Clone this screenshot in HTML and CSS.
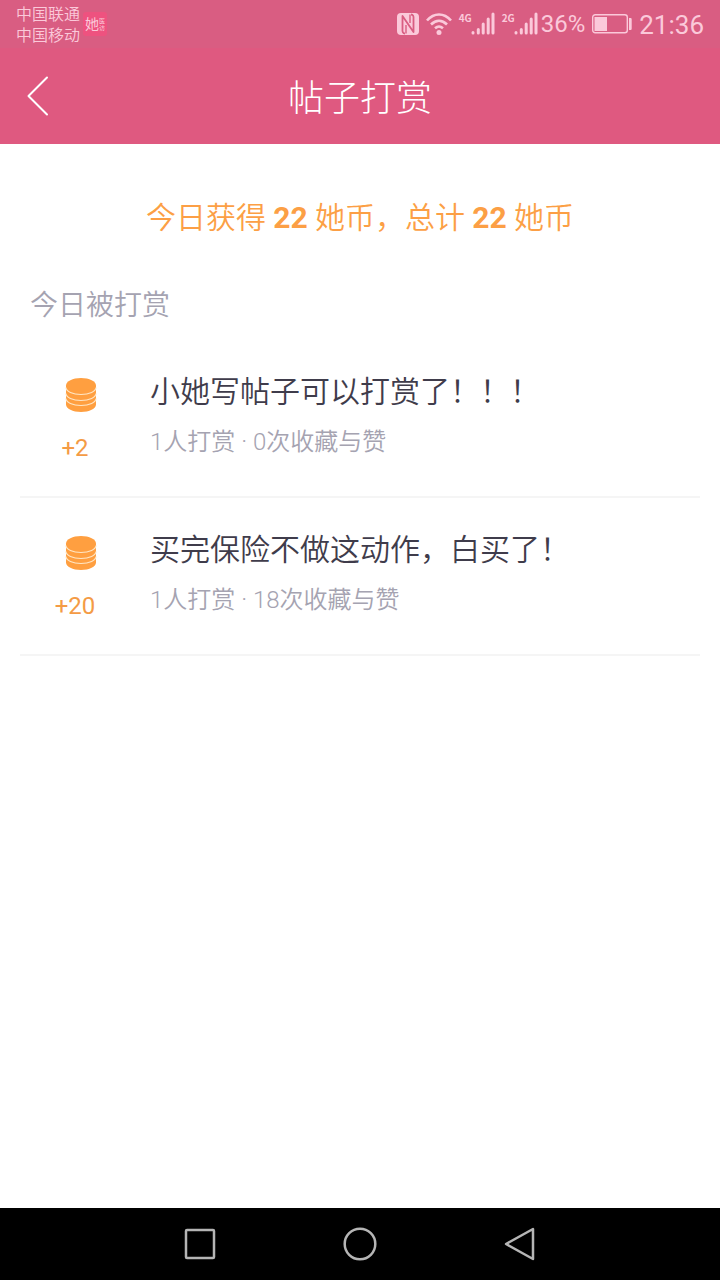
FILE: index.html
```html
<!DOCTYPE html>
<html lang="zh-CN">
<head>
<meta charset="utf-8">
<meta name="viewport" content="width=device-width, initial-scale=1">
<title>帖子打赏</title>
<link rel="stylesheet" href="styles.css">
</head>
<body>
<svg class="defs" aria-hidden="true">
  <symbol id="coins" viewBox="0 0 30 34">
    <path fill="#ff9f40" d="M0 7.500C0 3.400 6.700 0 15 0s15 3.400 15 7.500v19c0 4.100-6.700 7.500-15 7.500S0 30.600 0 26.500z"/>
    <path fill="none" stroke="#ffe6c4" stroke-width="1.200" d="M0 9.500A15 7 0 0 0 30 9.500M0 15.500A15 7 0 0 0 30 15.500M0 20.500A15 7 0 0 0 30 20.500"/>
  </symbol>
  <symbol id="signal" viewBox="0 0 24 24">
    <path fill="none" stroke="currentColor" stroke-width="3" stroke-linecap="round" d="M2 20.500v.5M7.300 17.500v3.500M12.200 12v9M17.200 7v14M22 2v19"/>
  </symbol>
</svg>
<div class="screen">
  <div class="status">
    <div class="carriers"><span>中国联通</span><span>中国移动</span></div>
    <div class="app-badge"><span class="app-name">她</span><span class="app-side"><span>医</span><span>访</span></span></div>
    <div class="indicators">
      <svg class="nfc" viewBox="0 0 22 22"><rect width="22" height="22" rx="4" fill="currentColor"/><path fill="none" stroke="#d95d82" stroke-width="1.800" stroke-linejoin="round" d="M8 20.500Q5 20.500 5.500 16V3L16.500 19V6Q17 1.500 14 1.500"/><path fill="none" stroke="#d95d82" stroke-width="1.400" d="M9 20.500V12M13 1.500V10"/></svg>
      <svg class="wifi" viewBox="0 0 26 22"><g fill="none" stroke="currentColor" stroke-width="2.600"><path d="M1 7.500C8-.500 18-.500 25 7.500M5 11.500c5-5 11-5 16 0M9 15.200c3-2.500 5-2.500 8 0"/></g><circle cx="13" cy="19.500" r="2.500" fill="currentColor"/></svg>
      <div class="network"><span>4G</span><svg><use href="#signal"/></svg></div>
      <div class="network"><span>2G</span><svg><use href="#signal"/></svg></div>
      <span class="percent">36%</span>
      <svg class="battery" viewBox="0 0 40 20"><rect x=".7" y=".7" width="34.600" height="18" rx="2.500" fill="none" stroke="currentColor" stroke-width="1.400"/><path fill="currentColor" d="M2.500 3h12.500v14H2.500zM37 4h1.500q1.200 0 1.200 1.200v9.600q0 1.200-1.200 1.200H37z"/></svg>
      <span class="time">21:36</span>
    </div>
  </div>
  <header class="header">
    <button class="back" aria-label="返回"><svg viewBox="0 0 22 40"><path fill="none" stroke="#fff" stroke-width="2" stroke-linecap="round" stroke-linejoin="round" d="M20 1.500L1.500 20 20 38.500"/></svg></button>
    <h1>帖子打赏</h1>
  </header>
  <main class="content">
    <p class="summary">今日获得 <b>22</b> 她币，总计 <b>22</b> 她币</p>
    <h2>今日被打赏</h2>
    <ul class="rewards">
      <li>
        <div class="gain"><svg class="coins"><use href="#coins"/></svg><span>+2</span></div>
        <div class="post"><h3>小她写帖子可以打赏了！！！</h3><p>1人打赏 · 0次收藏与赞</p></div>
      </li>
      <li>
        <div class="gain"><svg class="coins"><use href="#coins"/></svg><span>+20</span></div>
        <div class="post"><h3>买完保险不做这动作，白买了！</h3><p>1人打赏 · 18次收藏与赞</p></div>
      </li>
    </ul>
  </main>
  <nav class="navbar">
    <button aria-label="最近任务"><svg viewBox="0 0 34 34"><rect x="3" y="3" width="28" height="28" rx="1" fill="none" stroke="#b5b5b5" stroke-width="2.500"/></svg></button>
    <button aria-label="主屏幕"><svg viewBox="0 0 34 34"><circle cx="17" cy="17" r="15.300" fill="none" stroke="#b5b5b5" stroke-width="2.500"/></svg></button>
    <button aria-label="返回上一页"><svg viewBox="0 0 34 34"><path d="M3 17L30 2v30z" fill="none" stroke="#b5b5b5" stroke-width="2.500" stroke-linejoin="round"/></svg></button>
  </nav>
</div>
</body>
</html>
```
FILE: styles.css
```css
* { box-sizing: border-box; margin: 0; padding: 0; }
body { background: #fff; font-family: Roboto, "Noto Sans CJK SC", sans-serif; font-weight: 400; }
button { border: 0; background: none; display: flex; align-items: center; justify-content: center; cursor: pointer; }
.defs { display: none; }
.screen { display: flex; flex-direction: column; min-height: 100vh; }

.status { display: flex; align-items: center; height: 48px; padding: 0 16px; background: #d95d82; color: #fbc9da; }
.carriers { display: flex; flex-direction: column; font-size: 16px; line-height: 21px; font-weight: 350; padding-top: 2px; }
.app-badge { display: flex; align-items: center; justify-content: center; width: 24px; height: 24px; margin-left: 3px; border-radius: 3px; background: #ee527f; }
.app-name { font-size: 14px; line-height: 16px; }
.app-side { display: flex; flex-direction: column; font-size: 6px; line-height: 7px; }
.indicators { display: flex; align-items: center; margin-left: auto; }
.nfc { width: 22px; height: 22px; }
.wifi { width: 26px; height: 22px; margin-left: 7px; }
.network { display: flex; align-items: flex-start; margin-left: 7px; }
.network span { font-family: "Noto Sans CJK SC", sans-serif; font-size: 10px; line-height: 11px; font-weight: 700; width: 12px; }
.network svg { width: 24px; height: 24px; }
.percent { margin-left: 3px; font-size: 24px; line-height: 32px; }
.battery { width: 40px; height: 20px; margin: 0 7px; }
.time { font-size: 26px; line-height: 32px; padding-top: 2px; }

.header { display: grid; grid-template-columns: 76px 1fr 76px; align-items: center; height: 96px; background: #df5980; color: #fff; }
.header h1 { padding-top: 6px; font-size: 36px; line-height: 48px; font-weight: 300; text-align: center; }
.back { height: 96px; }
.back svg { width: 22px; height: 40px; }

.content { flex: 1; padding: 52px 20px 20px; }
.summary { text-align: center; color: #fc9f45; font-size: 30px; line-height: 44px; font-weight: 350; }
.summary b { font-weight: 700; }
.content h2 { margin: 46px 10px 0; color: #a5a3b1; font-size: 28px; line-height: 40px; font-weight: 350; }
.rewards { list-style: none; margin-top: 14px; }
.rewards li { display: flex; height: 158px; padding-top: 28px; border-bottom: 2px solid #f5f5f5; }
.gain { display: flex; flex-direction: column; align-items: center; width: 110px; padding-top: 10px; color: #f49b45; font-size: 24px; line-height: 28px; }
.coins { width: 32px; height: 34px; margin: 0 0 22px 12px; }
.post { flex: 1; padding: 2px 0 0 20px; }
.post h3 { color: #3f3c4b; font-size: 30px; line-height: 44px; font-weight: 350; }
.post p { margin-top: 12px; color: #a5a3b1; font-size: 24px; line-height: 32px; font-weight: 350; }

.navbar { display: flex; justify-content: center; gap: 88px; height: 72px; background: #000; }
.navbar button { width: 72px; height: 72px; }
.navbar svg { width: 34px; height: 34px; }
```
